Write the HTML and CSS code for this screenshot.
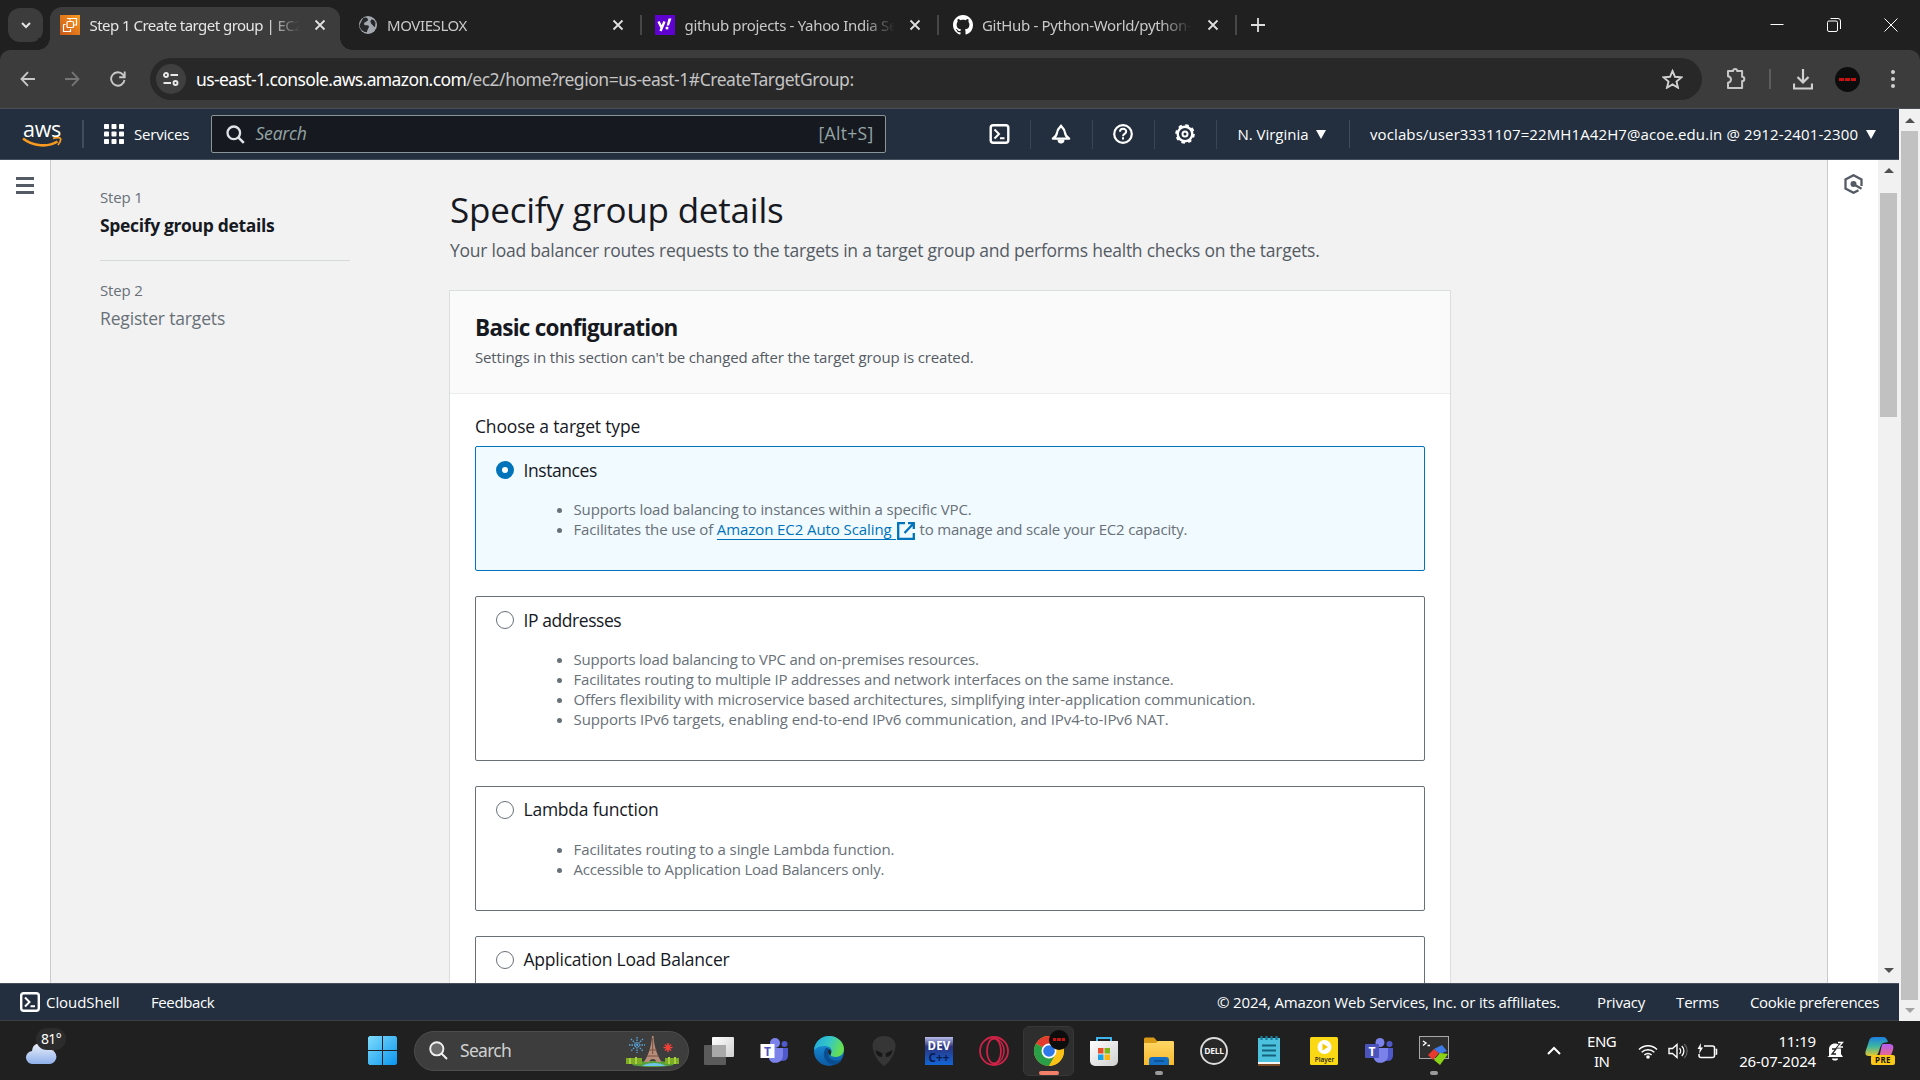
FILE: index.html
```html
<!DOCTYPE html>
<html lang="en">
<head>
<meta charset="utf-8">
<title>Step 1 Create target group | EC2</title>
<link rel="stylesheet" href="styles.css">
</head>
<body>
<svg class="defs" aria-hidden="true">
  <defs>
    <symbol id="x" viewBox="0 0 12 12"><path d="M1.5 1.5l9 9M10.500 1.500l-9 9" fill="none" stroke="currentColor" stroke-width="1.8"/></symbol>
    <symbol id="shell" viewBox="0 0 20 20"><rect x="1.200" y="1.200" width="17.600" height="17.600" rx="2.500" fill="none" stroke="currentColor" stroke-width="2.400"/><path d="M5 5.500l4.500 4.500L5 14.500M10.500 14.300h4.500" fill="none" stroke="currentColor" stroke-width="2"/></symbol>
    <linearGradient id="gOrange" x1="0" y1="1" x2="1" y2="0"><stop offset="0" stop-color="#c9571a"/><stop offset="1" stop-color="#fb9a1c"/></linearGradient>
    <linearGradient id="gWin" x1="0" y1="0" x2="1" y2="1"><stop offset="0" stop-color="#7fdcfb"/><stop offset="1" stop-color="#0a95ef"/></linearGradient>
    <linearGradient id="gCloud" x1="0" y1="0" x2="0" y2="1"><stop offset="0" stop-color="#eef3fc"/><stop offset="1" stop-color="#8fb0ea"/></linearGradient>
    <linearGradient id="gWhite" x1="0" y1="0" x2="1" y2="1"><stop offset="0" stop-color="#fff"/><stop offset="1" stop-color="#cfcfcf"/></linearGradient>
    <linearGradient id="gEdge" x1="0" y1="0" x2="1" y2=".3"><stop offset="0" stop-color="#1fa6dd"/><stop offset=".55" stop-color="#35c7c6"/><stop offset="1" stop-color="#66e052"/></linearGradient>
    <linearGradient id="gEdge2" x1="0" y1="0" x2="0" y2="1"><stop offset="0" stop-color="#1b9de2"/><stop offset="1" stop-color="#0c59a4"/></linearGradient>
    <linearGradient id="gDev" x1="0" y1="0" x2="0" y2="1"><stop offset="0" stop-color="#b9bdea"/><stop offset=".35" stop-color="#2b3480"/><stop offset="1" stop-color="#1266d8"/></linearGradient>
    <linearGradient id="gFold" x1="0" y1="0" x2="0" y2="1"><stop offset="0" stop-color="#ffd766"/><stop offset="1" stop-color="#f7b92c"/></linearGradient>
    <linearGradient id="gCop1" x1="0" y1="0" x2="0" y2="1"><stop offset="0" stop-color="#1a7fe0"/><stop offset=".5" stop-color="#3fb6a0"/><stop offset="1" stop-color="#e6c92e"/></linearGradient>
    <linearGradient id="gCop2" x1="0" y1="0" x2="0" y2="1"><stop offset="0" stop-color="#b45df0"/><stop offset="1" stop-color="#f2697a"/></linearGradient>
  </defs>
</svg>

<header class="tabstrip">
  <button class="tab-search"><svg width="10" height="7" viewBox="0 0 10 7"><path d="M1 1l4 4 4-4" fill="none" stroke="#e3e3e3" stroke-width="2"/></svg></button>
  <div class="tab active">
    <svg class="fav" viewBox="0 0 20 20"><rect width="20" height="20" fill="url(#gOrange)"/><g fill="none" stroke="#fff" stroke-width="1.200"><path d="M7 3.500h9.500v6.500h-2.500M3.500 9.500v7h7v-2.500M3.500 9.500h2M10 3.500v2"/><rect x="7" y="6.500" width="6.500" height="6" rx="1"/></g></svg>
    <span class="tab-title t1">Step 1 Create target group | EC2</span>
    <svg class="tab-x"><use href="#x"/></svg>
  </div>
  <div class="tab sep">
    <svg class="fav" viewBox="0 0 20 20"><circle cx="10" cy="10" r="9" fill="#a3a8ae"/><path d="M5 3.200c3-1.500 5 0 5 2-1 2-4 1-4 4 1 2 4 0 5 2 0 2-2 3-2 6-4 0-7-3-7.500-7C3 7 4 5 5 3.200zM13 5c2-1 3 0 4.500 2.500L17 12c-1 0-2-2-3.500-3-1-1-1.500-3-.5-4z" fill="#26272a"/></svg>
    <span class="tab-title t2">MOVIESLOX</span>
    <svg class="tab-x"><use href="#x"/></svg>
  </div>
  <div class="tab sep">
    <svg class="fav" viewBox="0 0 20 20"><rect width="20" height="20" fill="#5f01d1"/><path d="M3.500 6.500l3 6M9.500 6.500l-4 9.500" stroke="#fff" stroke-width="2.400" fill="none"/><path d="M13.500 3.500h3L14 10.500h-2.300z" fill="#fff"/><circle cx="12" cy="13" r="1.500" fill="#fff"/></svg>
    <span class="tab-title t3">github projects - Yahoo India Se</span>
    <svg class="tab-x"><use href="#x"/></svg>
  </div>
  <div class="tab sep">
    <svg class="fav" viewBox="0 0 16 16"><path fill="#fff" d="M8 0C3.580 0 0 3.580 0 8c0 3.540 2.290 6.530 5.470 7.590.4.070.550-.170.550-.380 0-.190-.010-.820-.010-1.490-2.010.370-2.530-.490-2.690-.940-.090-.230-.480-.940-.820-1.130-.280-.150-.680-.520-.010-.530.630-.010 1.080.580 1.230.820.720 1.210 1.870.870 2.330.660.070-.520.280-.870.510-1.070-1.780-.2-3.640-.890-3.640-3.950 0-.870.310-1.590.820-2.150-.080-.2-.360-1.020.080-2.120 0 0 .670-.210 2.200.820.640-.180 1.320-.270 2-.270s1.360.090 2 .270c1.530-1.040 2.200-.820 2.200-.820.440 1.100.160 1.920.080 2.120.510.560.820 1.270.820 2.150 0 3.070-1.870 3.750-3.650 3.950.290.250.540.730.540 1.480 0 1.070-.010 1.930-.010 2.200 0 .210.150.460.550.380A8 8 0 0 0 16 8c0-4.420-3.580-8-8-8z"/></svg>
    <span class="tab-title t4">GitHub - Python-World/python-</span>
    <svg class="tab-x"><use href="#x"/></svg>
  </div>
  <svg class="new-tab" viewBox="0 0 14 14"><path d="M7 0v14M0 7h14" stroke="#dedede" stroke-width="1.800"/></svg>
  <div class="win-buttons">
    <svg width="14" height="14" viewBox="0 0 14 14"><path d="M.5 6.500h13" stroke="#fff"/></svg>
    <svg width="14" height="14" viewBox="0 0 14 14"><rect x=".5" y="3" width="10" height="10.500" rx="1.500" fill="none" stroke="#fff"/><path d="M3.500 .5h7.500a2.500 2.500 0 0 1 2.500 2.500v8" fill="none" stroke="#fff"/></svg>
    <svg width="14" height="14" viewBox="0 0 14 14"><path d="M.5 .5l13 13M13.500 .5l-13 13" stroke="#fff"/></svg>
  </div>
</header>

<div class="toolbar">
  <svg class="tb-back" width="16" height="16" viewBox="0 0 16 16"><path d="M15 8H2M8 1.200L1.500 8 8 14.800" fill="none" stroke="#c7c7c7" stroke-width="1.900"/></svg>
  <svg class="tb-fwd" width="16" height="16" viewBox="0 0 16 16"><path d="M1 8h13M8 1.200L14.500 8 8 14.800" fill="none" stroke="#757575" stroke-width="1.900"/></svg>
  <svg class="tb-reload" width="16" height="16" viewBox="0 0 16 16"><path d="M14.500 9A6.700 6.700 0 1 1 13 3.700L14.500 5.500M14.700 .5v5.700H9.200" fill="none" stroke="#c7c7c7" stroke-width="1.900"/></svg>
  <div class="omnibox">
    <span class="site-info"><svg width="16" height="14" viewBox="0 0 16 14"><g fill="none" stroke="#e8e8e8" stroke-width="1.900"><circle cx="3" cy="3" r="2"/><path d="M7.500 3H15M.5 11h7.500"/><circle cx="12.500" cy="11" r="2"/></g></svg></span>
    <span class="url"><b>us-east-1.console.aws.amazon.com</b>/ec2/home?region=us-east-1#CreateTargetGroup:</span>
    <svg class="star" width="21" height="20" viewBox="0 0 21 20"><path d="M10.500 2l2.500 5.800 6.300.600-4.800 4.100 1.500 6.200-5.500-3.300L5 18.700l1.500-6.200L1.700 8.400 8 7.800z" fill="none" stroke="#d0d0d0" stroke-width="1.900"/></svg>
  </div>
  <svg class="ext" width="21" height="22" viewBox="0 0 21 22"><path d="M2.500 3h4.600a2 2 0 0 1 4 0h5v5.700a2.200 2.200 0 0 1 0 4.400V20H2v-5.200c4-1 4-5.600 0-6.500V3z" fill="none" stroke="#c7c7c7" stroke-width="2" stroke-linejoin="round"/></svg>
  <i class="tb-sep"></i>
  <svg class="dl" width="20" height="21" viewBox="0 0 20 21"><path d="M10 0v13M4.500 8L10 13.500 15.500 8M1 14.500V19.500h18V14.500" fill="none" stroke="#d0d0d0" stroke-width="2.200"/></svg>
  <span class="avatar"><i></i><i></i><i></i></span>
  <svg class="kebab" width="4" height="20" viewBox="0 0 4 20"><g fill="#d0d0d0"><circle cx="2" cy="3" r="2"/><circle cx="2" cy="10" r="2"/><circle cx="2" cy="17" r="2"/></g></svg>
</div>

<div class="viewport">
  <div class="page">
    <nav class="awsnav">
      <div class="logo"><span>aws</span><svg width="40" height="11" viewBox="0 0 40 11"><path d="M1 1.500C11 9.500 26 10.500 35.500 4.500" fill="none" stroke="#f79a1e" stroke-width="2.600"/><path d="M31 1.500c3-1.200 7-1.200 7.500 0s-.5 4-2.500 6.500" fill="none" stroke="#f79a1e" stroke-width="1.800"/></svg></div>
      <i class="nav-sep big"></i>
      <svg class="grid" width="20" height="20" viewBox="0 0 20 20"><g fill="#fff"><rect width="5" height="5" rx=".8"/><rect x="7.500" width="5" height="5" rx=".8"/><rect x="15" width="5" height="5" rx=".8"/><rect y="7.500" width="5" height="5" rx=".8"/><rect x="7.500" y="7.500" width="5" height="5" rx=".8"/><rect x="15" y="7.500" width="5" height="5" rx=".8"/><rect y="15" width="5" height="5" rx=".8"/><rect x="7.500" y="15" width="5" height="5" rx=".8"/><rect x="15" y="15" width="5" height="5" rx=".8"/></g></svg>
      <span class="services">Services</span>
      <div class="searchbox">
        <svg width="19" height="19" viewBox="0 0 19 19"><circle cx="7.800" cy="7.800" r="6.300" fill="none" stroke="#dfe3e6" stroke-width="2.300"/><path d="M12.300 12.300l5.500 5.500" stroke="#dfe3e6" stroke-width="2.600"/></svg>
        <em>Search</em><span>[Alt+S]</span>
      </div>
      <div class="nav-icons">
        <span><svg width="21" height="20"><use href="#shell"/></svg></span>
        <span><svg width="20" height="20" viewBox="0 0 20 20"><path d="M10 1.500C9.500 4 6.500 4 6.200 8c-.3 3.500-1.500 4.500-4.400 6.700h16.400C15.300 12.500 14.100 11.500 13.800 8 13.500 4 10.500 4 10 1.500z" fill="none" stroke="#fff" stroke-width="2.200" stroke-linejoin="round"/><path d="M6.500 15.500a3.500 4 0 0 0 7 0z" fill="#fff"/></svg></span>
        <span><svg width="20" height="20" viewBox="0 0 20 20"><circle cx="10" cy="10" r="8.800" fill="none" stroke="#fff" stroke-width="2.200"/><path d="M7 7.800C7 3.800 13.200 4 13.200 7.500c0 2.300-3.200 2.500-3.200 4.700M10 13.300v2.200" fill="none" stroke="#fff" stroke-width="2"/></svg></span>
        <span><svg width="20" height="20" viewBox="0 0 20 20"><circle cx="10" cy="10" r="7.300" fill="none" stroke="#fff" stroke-width="2.400"/><circle cx="10" cy="10" r="8.700" fill="none" stroke="#fff" stroke-width="2.200" stroke-dasharray="3.500 3.330"/><circle cx="10" cy="10" r="2.500" fill="none" stroke="#fff" stroke-width="2"/></svg></span>
      </div>
      <span class="region">N. Virginia</span><i class="caret"></i>
      <i class="nav-sep mid"></i>
      <span class="account">voclabs/user3331107=22MH1A42H7@acoe.edu.in @ 2912-2401-2300</span><i class="caret"></i>
    </nav>

    <div class="body">
      <aside class="left-rail"><i></i><i></i><i></i></aside>
      <main>
        <ol class="steps">
          <li><small>Step 1</small><strong>Specify group details</strong></li>
          <li><small>Step 2</small><span>Register targets</span></li>
        </ol>
        <section class="content">
          <h1>Specify group details</h1>
          <p class="lead">Your load balancer routes requests to the targets in a target group and performs health checks on the targets.</p>
          <div class="panel">
            <div class="panel-head">
              <h2>Basic configuration</h2>
              <p>Settings in this section can't be changed after the target group is created.</p>
            </div>
            <div class="panel-body">
              <div class="field-label">Choose a target type</div>
              <div class="options">
                <div class="option selected">
                  <label class="tight"><i class="radio"></i>Instances</label>
                  <ul>
                    <li>Supports load balancing to instances within a specific VPC.</li>
                    <li>Facilitates the use of <a>Amazon EC2 Auto Scaling </a><svg class="extlink" width="18" height="18" viewBox="0 0 18 18"><path d="M8 1.200H1.200v15.600h15.600V11M11 1.200h5.800V7M16.500 1.500l-9 9.500" fill="none" stroke="#0073bb" stroke-width="2.300"/></svg><span class="tail">to manage and scale your EC2 capacity.</span></li>
                  </ul>
                </div>
                <div class="option">
                  <label class="tight"><i class="radio"></i>IP addresses</label>
                  <ul class="four">
                    <li class="narrow">Supports load balancing to VPC and on-premises resources.</li>
                    <li class="narrow">Facilitates routing to multiple IP addresses and network interfaces on the same instance.</li>
                    <li>Offers flexibility with microservice based architectures, simplifying inter-application communication.</li>
                    <li class="wide">Supports IPv6 targets, enabling end-to-end IPv6 communication, and IPv4-to-IPv6 NAT.</li>
                  </ul>
                </div>
                <div class="option">
                  <label><i class="radio"></i>Lambda function</label>
                  <ul>
                    <li class="wide">Facilitates routing to a single Lambda function.</li>
                    <li class="narrow">Accessible to Application Load Balancers only.</li>
                  </ul>
                </div>
                <div class="option last">
                  <label><i class="radio"></i>Application Load Balancer</label>
                </div>
              </div>
            </div>
          </div>
        </section>
      </main>
      <aside class="right-rail"><svg width="19" height="20" viewBox="0 0 19 20"><path d="M17.500 12V5.500L9.500 1.200 1.500 5.500v9l8 4.300 5-2.600" fill="none" stroke="#545b64" stroke-width="2.300"/><circle cx="9.500" cy="10" r="3" fill="#545b64"/><path d="M10 10.500l7.500 4.200" stroke="#545b64" stroke-width="2.300"/></svg></aside>
      <div class="scroll inner"><i class="up"></i><b></b><i class="down"></i></div>
    </div>

    <footer class="awsfoot">
      <svg width="20" height="20"><use href="#shell"/></svg>
      <span class="cs">CloudShell</span><span class="fb">Feedback</span>
      <span class="copy">© 2024, Amazon Web Services, Inc. or its affiliates.</span>
      <span class="pv">Privacy</span><span class="tm">Terms</span><span class="ck">Cookie preferences</span>
    </footer>
  </div>
  <div class="scroll outer"><i class="up"></i><b></b><i class="down"></i></div>
</div>

<div class="taskbar">
  <div class="weather">
    <svg width="32" height="24" viewBox="0 0 32 24"><path d="M20 5l8 0v6z" fill="#e8792b"/><path d="M7 24a6.500 6.500 0 0 1-1-13A8.500 8.500 0 0 1 21.500 6.500 7 7 0 0 1 24 9.500 7.300 7.300 0 0 1 24 24z" fill="url(#gCloud)"/></svg>
    <span>81°</span>
  </div>
  <svg class="start" width="29" height="29" viewBox="0 0 29 29"><path d="M1.500 0H14v14H0V1.500zM15 0h12.500L29 1.500V14H15zM0 15h14v14H1.500L0 27.500zM15 15h14v12.500L27.500 29H15z" fill="url(#gWin)"/></svg>
  <div class="tsearch">
    <svg width="19" height="19" viewBox="0 0 19 19"><circle cx="7.800" cy="7.800" r="6.600" fill="#6b6b6b" stroke="#f0f0f0" stroke-width="1.900"/><path d="M12.500 12.500l5.500 5.500" stroke="#f0f0f0" stroke-width="2"/></svg>
    <span>Search</span>
    <svg width="54" height="32" viewBox="0 0 54 32"><g stroke="#5aa8e0" stroke-width="1.300" stroke-dasharray="1.500 1"><path d="M11 2v16M3 10h16M5 4l12 12M17 4L5 16"/></g><g stroke="#f04038" stroke-width="1.500"><path d="M42 8v9M37.500 12.500h9M39 9.500l6 6M45 9.500l-6 6"/></g><ellipse cx="27" cy="29" rx="21" ry="3" fill="#5aa03a"/><path d="M16 31c6-4 18-4 24 0z" fill="#6cc6e8"/><path d="M0 23h16v6H0zM39 23h14v6H39z" fill="#7cab26"/><path d="M4 23v6M10 22v7M43 22v7M49 22v7" stroke="#a8cf40" stroke-width="2"/><path d="M26 1h1.500c.5 9 2.500 17 8 26h-5c-1-4-6-4-7.500 0h-5c5.500-9 7.500-17 8-26z" fill="#b98d7a"/><path d="M23 15h8M21 21h12M26.700 3v16" stroke="#74503f"/></svg>
  </div>
  <div class="apps">
    <div><svg viewBox="0 0 32 32"><rect x="9" y="2" width="22" height="20" rx="1" fill="url(#gWhite)"/><rect x="1" y="10" width="22" height="20" rx="1" fill="#666" opacity=".85"/><rect x="9" y="10" width="14" height="12" fill="#a9a9a9"/></svg></div>
    <div><svg viewBox="0 0 32 32"><circle cx="17" cy="8" r="5" fill="#7b83eb"/><circle cx="26.500" cy="9" r="3" fill="#5059c9"/><path d="M21 13h9v7c0 6-5 7-8 5z" fill="#5059c9"/><path d="M11 13h14v8a7.500 7.500 0 0 1-14 3z" fill="#7b83eb"/><rect x="2.500" y="9" width="14" height="14" fill="#fff"/><text x="9.500" y="20.500" class="glyph" fill="#4b53bc">T</text></svg></div>
    <div><svg viewBox="0 0 32 32"><circle cx="16" cy="16" r="15" fill="url(#gEdge2)"/><path d="M1 15C2 6 9 1 16 1c9 0 15 6.500 15 13 0 5-4 8-8.500 8-3 0-5.500-1-5-2.500 2.500-3 1-8-4.500-8.500-6-.5-10 2-12 4z" fill="url(#gEdge)"/><path d="M13 13c-5 6-1 16 8 17 4-1 7-3 8-5.500-7 3-14 0-13.500-5.500.200-2 1-4-.500-6z" fill="#0a4e92"/><path d="M16 14c-1.500 2-1 6 3 7.500l3 .500c-2.500 0-5-1-4.500-2.500 1-1.500 1-4-1.500-5.500z" fill="#202020"/></svg></div>
    <div><svg viewBox="0 0 32 32"><path d="M16 1c7 0 11.500 4 11.500 10 0 7-7 18-11.500 20C11.500 29 4.500 18 4.500 11 4.500 5 9 1 16 1z" fill="#363636"/><path d="M7.500 15l7 3.500-.5 3.500c-4 0-6-3-6.500-7zM24.500 15l-7 3.500.5 3.500c4 0 6-3 6.500-7z" fill="#171717"/></svg></div>
    <div><svg viewBox="0 0 32 32"><rect x="2" y="2" width="28" height="28" fill="url(#gDev)"/><text x="16" y="14.500" class="glyph dev" fill="#fff">DEV</text><text x="16" y="27" class="glyph dev" fill="#0a1a50">C++</text></svg></div>
    <div><svg viewBox="0 0 32 32"><circle cx="16" cy="16" r="14" fill="none" stroke="#cc2347" stroke-width="1.800"/><ellipse cx="16" cy="16" rx="7" ry="12.500" fill="none" stroke="#cc2347" stroke-width="1.800"/><path d="M17 3c12 4 12 22 0 26" fill="none" stroke="#cc2347" stroke-width="1.600"/></svg></div>
    <div class="current"><svg viewBox="0 0 32 32"><circle cx="16" cy="16" r="15" fill="#fbc116"/><path d="M16 16L3 8.500A15 15 0 0 1 29 8.500z" fill="#e33b2e"/><path d="M16 16L3 8.500A15 15 0 0 0 16 31L22.500 19.500z" fill="#2b9f48"/><path d="M16 9h13.300A15 15 0 0 1 16 31l6.300-11z" fill="#fbc116"/><circle cx="16" cy="16" r="7.500" fill="#fff"/><circle cx="16" cy="16" r="5.800" fill="#2f78ea"/></svg><span class="avatar mini"><i></i><i></i><i></i></span></div>
    <div><svg viewBox="0 0 32 32"><path d="M9 8V3h14v5" fill="none" stroke="#3cb4ee" stroke-width="2"/><path d="M2 6h28v20a5 5 0 0 1-5 5H7a5 5 0 0 1-5-5z" fill="url(#gWhite)"/><path d="M10 13h5.500v5.500H10z" fill="#e8502a"/><path d="M16.500 13H22v5.500h-5.500z" fill="#7cb519"/><path d="M10 19.500h5.500V25H10z" fill="#19a1e8"/><path d="M16.500 19.500H22V25h-5.500z" fill="#fbb50e"/></svg></div>
    <div class="open"><svg viewBox="0 0 32 32"><path d="M1 4a1.500 1.500 0 0 1 1.500-1.500H11L14 6h15.500A1.500 1.500 0 0 1 31 7.500V12H1z" fill="#d99a16"/><path d="M1 8h12l2-2h14.500A1.500 1.500 0 0 1 31 7.500V30H1z" fill="url(#gFold)"/><path d="M6 30v-5a3 3 0 0 1 3-3h14a3 3 0 0 1 3 3v5z" fill="#146fc4"/><path d="M11 26h10" stroke="#0b4a8a" stroke-width="1.500"/></svg></div>
    <div><svg viewBox="0 0 32 32"><circle cx="16" cy="16" r="13" fill="#282828" stroke="#dcdcdc" stroke-width="1.900"/><text x="16" y="19" class="glyph dell" fill="#f4f4f4">DELL</text></svg></div>
    <div><svg viewBox="0 0 32 32"><rect x="5" y="3" width="22" height="27" fill="#4cc1de"/><path d="M5 27h22v2H5z" fill="#f4f4f4"/><path d="M5 29h22v2H5z" fill="#7a4a22"/><path d="M9 10.500h14M9 15.500h14M9 20.500h14" stroke="#15627c" stroke-width="2"/><path d="M8.500 1v4M13.500 1v4M18.500 1v4M23.500 1v4" stroke="#1a7c9c" stroke-width="2.200"/></svg></div>
    <div><svg viewBox="0 0 32 32"><rect x="2" y="2" width="28" height="28" rx="1.500" fill="#fbd814"/><circle cx="16.500" cy="12" r="7" fill="#fff"/><path d="M14.500 8.500l5.500 3.500-5.500 3.500z" fill="#f3c800"/><text x="16.500" y="26.500" class="glyph player" fill="#222">Player</text></svg></div>
    <div><svg viewBox="0 0 32 32"><circle cx="17" cy="7.500" r="4.500" fill="#7b83eb"/><circle cx="26.500" cy="9" r="3" fill="#5059c9"/><path d="M21 13h9v7c0 6-5 7-8 5z" fill="#5059c9"/><path d="M11 13h14v8a7.500 7.500 0 0 1-14 3z" fill="#7b83eb"/><rect x="2" y="9" width="14" height="14" rx="1" fill="#4b53bc"/><text x="9" y="20.500" class="glyph" fill="#fff">T</text></svg></div>
    <div class="open"><svg viewBox="0 0 32 32"><rect x="1.500" y="1.500" width="29" height="22" fill="#2f2f2f" stroke="#a8a8a8"/><path d="M5 6l3 2-3 2.500M9.500 10.500h2.500" stroke="#fff" fill="none" stroke-width="1.400"/><path d="M10 20l6-6 5 4-6 7z" fill="#e8392e"/><path d="M16 14l8-4 5 6-7 3z" fill="#3c7be8"/><path d="M16 25l6-7 8 1-8 11z" fill="#8bd216"/></svg></div>
  </div>
  <div class="tray">
    <svg class="chev" width="14" height="9" viewBox="0 0 14 9"><path d="M1 8l6-6 6 6" fill="none" stroke="#fff" stroke-width="2"/></svg>
    <span class="lang">ENG<br>IN</span>
    <svg class="wifi" width="20" height="16" viewBox="0 0 20 16"><g fill="none" stroke="#fff" stroke-width="1.500"><path d="M1 6.500a12.700 12.700 0 0 1 18 0M3.700 9.300a8.900 8.900 0 0 1 12.600 0M6.400 12a5.100 5.100 0 0 1 7.200 0"/></g><circle cx="10" cy="14" r="1.800" fill="#fff"/></svg>
    <svg class="vol" width="20" height="16" viewBox="0 0 20 16"><path d="M1 5.500h3.500L9 1.500v13l-4.500-4H1z" fill="none" stroke="#fff" stroke-width="1.400"/><path d="M11.500 5.200c1.500 1.500 1.500 4.100 0 5.600M13.800 3c2.800 2.800 2.800 7.200 0 10" fill="none" stroke="#fff" stroke-width="1.300"/><path d="M16.300 1c3.800 3.900 3.800 10.100 0 14" fill="none" stroke="#666" stroke-width="1.200"/></svg>
    <svg class="bat" width="21" height="16" viewBox="0 0 21 16"><path d="M7 3h8.500a2 2 0 0 1 2 2v7.500a2 2 0 0 1-2 2H4a2 2 0 0 1-2-2V11" fill="none" stroke="#fff" stroke-width="1.500"/><path d="M18.500 6.500h1v4.500h-1" stroke="#fff" stroke-width="1.500" fill="none"/><path d="M4 0L.5 6h2.300L2 11l4-6.500H3.700z" fill="#fff"/></svg>
    <span class="clock">11:19<br>26-07-2024</span>
    <svg class="dnd" width="17" height="20" viewBox="0 0 17 20"><path d="M2 15V8.500C2 5 4.500 2.500 8 2.500s6 2.500 6 6V13l2 3H0z" fill="#fff"/><path d="M5 17.500h6a3 2 0 0 1-6 0z" fill="#fff"/><path d="M5 8h4l-4 5h4" stroke="#202020" stroke-width="1.300" fill="none"/><path d="M11 1.500h4.500L11.500 6H16" stroke="#202020" stroke-width="3" fill="none"/><path d="M11 1.500h4.500L11.500 6H16" stroke="#fff" stroke-width="1.300" fill="none"/></svg>
    <div class="copilot"><svg width="30" height="30" viewBox="0 0 30 30"><path d="M9 1h9c3 0 4 2 5 5l-5 1c-2 1-3 5-4 8s-2 5-5 5H4c-4 0-4-3-3-6L4 5c1-3 2-4 5-4z" fill="url(#gCop1)"/><path d="M18 8h6c4 0 5 2 4 6l-3 8H12c3-1 3-5 4-9 .5-3 1-5 2-5z" fill="url(#gCop2)"/></svg><span>PRE</span></div>
  </div>
</div>
</body>
</html>
```
FILE: styles.css
```css
* { box-sizing: border-box; }
html, body { height: 100%; }
body {
  margin: 0;
  width: 1920px;
  height: 1080px;
  overflow: hidden;
  display: flex;
  flex-direction: column;
  background: #202020;
  font-family: "Open Sans", "Noto Sans", sans-serif;
  font-size: 17.5px;
  line-height: 27.5px;
  color: #16191f;
}
.defs { position: absolute; width: 0; height: 0; }
svg { display: block; flex: none; }
i { font-style: normal; flex: none; }
span { white-space: nowrap; }

/* Browser tab strip */
.tabstrip { height: 50px; flex: none; display: flex; align-items: center; background: #202020; }
.tab-search { width: 35px; height: 34px; margin: 0 7px 0 8px; padding: 0; border: 0; border-radius: 12px; background: #3c3c3c; display: flex; align-items: center; justify-content: center; }
.tab { position: relative; width: 297.5px; height: 50px; display: flex; align-items: center; padding-left: 10px; color: #c9c9c9; font: 15px/20px "Noto Sans", sans-serif; }
.tab.active { color: #e6e6e6; z-index: 1; }
.tab.active::before { content: ""; position: absolute; z-index: -1; left: 0; top: 7px; width: 290px; height: 43px; border-radius: 12px 12px 0 0; background: #3c3c3c; }
.tab.active::after { content: ""; position: absolute; z-index: -1; left: -12px; bottom: 0; width: 314px; height: 12px; background: radial-gradient(circle at 0 0, #202020 11.500px, #3c3c3c 12px) left / 12px 12px no-repeat, radial-gradient(circle at 100% 0, #202020 11.500px, #3c3c3c 12px) right / 12px 12px no-repeat; }
.tab.sep::after { content: ""; position: absolute; right: 3.500px; top: 15px; width: 2px; height: 20px; background: #474747; }
.fav { width: 20px; height: 20px; margin-right: 9.500px; }
.tab-title { width: 213px; overflow: hidden; white-space: nowrap; -webkit-mask-image: linear-gradient(90deg, #000 178px, transparent 210px); mask-image: linear-gradient(90deg, #000 178px, transparent 210px); }
.t1 { letter-spacing: -.53px; }
.t2 { letter-spacing: -.4px; }
.t3, .t4 { letter-spacing: -.33px; }
.tab-x { width: 12px; height: 12px; margin-left: 11.500px; color: #e0e0e0; }
.new-tab { width: 14px; height: 14px; margin-left: 11px; }
.win-buttons { margin-left: auto; margin-right: 22px; display: flex; gap: 43px; }

/* Address bar */
.toolbar { height: 58px; flex: none; display: flex; align-items: center; background: #3c3c3c; border-radius: 10px 10px 0 0; padding-left: 20px; }
.tb-fwd { margin-left: 28px; }
.tb-reload { margin-left: 30px; }
.omnibox { width: 1552px; height: 42px; margin-left: 24px; border-radius: 21px; background: #282828; display: flex; align-items: center; padding-left: 6px; }
.site-info { width: 30px; height: 30px; border-radius: 50%; background: #3f3f3f; display: flex; align-items: center; justify-content: center; }
.url { margin-left: 10px; font: 17.5px/24px "Noto Sans", sans-serif; letter-spacing: -.47px; color: #c4c4c4; }
.url b { font-weight: 400; letter-spacing: -.61px; color: #fff; }
.star { margin-left: auto; margin-right: 19.500px; }
.ext { margin-left: 24px; }
.tb-sep { width: 2px; height: 20px; margin: 0 22px; background: #5c5c5c; }
.avatar { width: 25px; height: 25px; margin-left: 22px; border-radius: 50%; background: #0d0d0d; display: flex; align-items: center; justify-content: center; gap: 1.500px; }
.avatar i { width: 4.500px; height: 3px; background: #c81212; }
.kebab { margin-left: 31px; }

/* Page area with its outer scrollbar */
.viewport { height: 913px; flex: none; display: flex; border-top: 1px solid #4a4f57; }
.page { width: 1899px; display: flex; flex-direction: column; }

.awsnav { height: 51px; flex: none; display: flex; align-items: center; background: #232f3e; color: #fff; font-size: 15px; font-weight: 500; border-bottom: 1px solid #46505d; }
.logo { width: 40px; height: 28px; margin-left: 22px; display: flex; flex-direction: column; align-items: center; }
.logo span { font-size: 21.5px; line-height: 17px; height: 17px; letter-spacing: -.3px; font-weight: 500; }
.nav-sep { width: 1px; height: 28px; background: #414c59; }
.nav-sep.big { width: 2px; margin: 0 20px 0 19.500px; }
.services { width: 67px; margin-left: 10.500px; letter-spacing: -.2px; }
.services, .region, .account { padding-top: 1px; }
.searchbox { width: 675px; height: 38px; margin-left: 9.500px; border: 1px solid #8b9598; border-radius: 2px; background: #16191f; display: flex; align-items: center; padding: 0 11px 0 14px; color: #95a5a6; font-size: 17.5px; font-weight: 400; }
.searchbox em { margin-left: 11px; letter-spacing: -.2px; }
.searchbox span { margin-left: auto; letter-spacing: .32px; }
.nav-icons { display: flex; margin-left: 83px; }
.nav-icons span { width: 62px; height: 29px; display: flex; align-items: center; justify-content: center; border-right: 1px solid #3a4553; }
.region { margin-left: 21px; width: 71.500px; letter-spacing: -.02px; }
.caret { width: 0; height: 0; margin-left: 7px; border: 5px solid transparent; border-top: 9px solid #fff; border-bottom: 0; }
.nav-sep.mid { margin: 0 20px 0 23px; }
.account { width: 488px; letter-spacing: .11px; }
.account + .caret { margin-left: 8px; }

.body { flex: 1; min-height: 0; display: flex; }
.left-rail { width: 51px; background: #fff; border-right: 1px solid #c5cccc; display: flex; flex-direction: column; gap: 4.500px; padding: 17px 0 0 16px; }
.left-rail i { width: 18px; height: 2.500px; background: #545b64; }
main { width: 1776px; display: flex; padding-left: 49px; background: #f2f2f2; overflow: hidden; }

.steps { width: 250px; margin: 27px 100px 0 0; padding: 0; list-style: none; letter-spacing: -.16px; color: #687078; }
.steps li { display: flex; flex-direction: column; gap: 5px; }
.steps li + li { margin-top: 20px; padding-top: 19px; border-top: 1px solid #d5dbdb; }
.steps small { font-size: 15px; line-height: 20px; }
.steps strong { font-weight: 700; letter-spacing: -.34px; color: #16191f; }

.content { width: 1000px; }
h1 { margin: 26.500px 0 5.500px; font-size: 35px; line-height: 45px; font-weight: 400; letter-spacing: -.21px; }
.lead { margin: 0 0 26px; color: #545b64; letter-spacing: -.24px; white-space: nowrap; }
.panel { background: #fff; box-shadow: 0 0 0 1px #d9dede; height: 1200px; }
.panel-head { height: 103px; padding: 23.500px 25px 0; background: #fafafa; border-bottom: 1px solid #eaeded; }
h2 { margin: 0 0 5px; font-size: 22.5px; line-height: 27.5px; font-weight: 700; letter-spacing: -.74px; }
.panel-head p { margin: 0; font-size: 15px; line-height: 20px; letter-spacing: -.14px; color: #545b64; }
.panel-body { padding: 19px 25px; }
.field-label { letter-spacing: -.17px; }
.options { margin-top: 6px; display: flex; flex-direction: column; gap: 25px; }
.option { border: 1px solid #687078; border-radius: 2px; padding: 9.500px 20px 31px; }
.option.selected { border-color: #0073bb; background: #f1faff; }
.option label { display: flex; align-items: center; letter-spacing: -.23px; }
.option label.tight { letter-spacing: -.43px; }
.option.last { height: 126px; }
.radio { width: 18px; height: 18px; margin-right: 9.500px; border: 1px solid #687078; border-radius: 50%; background: #fff; }
.selected .radio { border: 6px solid #0073bb; }
.option ul { margin: 15px 0 0; padding: 0 0 0 77.500px; font-size: 15px; line-height: 20px; letter-spacing: -.145px; color: #687078; }
.option ul.four { margin-top: 14.500px; }
.option li { white-space: nowrap; height: 20px; }
.option li.narrow { letter-spacing: -.2px; }
.option li.wide { letter-spacing: -.09px; }
.option a { color: #0073bb; border-bottom: 1px solid #0073bb; white-space: pre; letter-spacing: -.08px; }
.extlink { display: inline-block; vertical-align: -2px; margin: -5px 5px -3px 1px; }
.tail { letter-spacing: -.18px; }

.right-rail { width: 51px; background: #fff; border-left: 1px solid #c5cccc; padding: 14px 0 0 15.500px; }
.scroll { display: flex; flex-direction: column; align-items: center; background: #f1f1f1; }
.scroll .up, .scroll .down { width: 0; height: 0; border: 5px solid transparent; }
.scroll .up { border-top: 0; border-bottom-color: #505050; }
.scroll .down { border-bottom: 0; border-top-color: #505050; margin-top: auto; }
.scroll b { background: #c1c1c1; }
.inner { width: 21px; padding: 8px 0 10px; }
.inner b { width: 17px; height: 224px; margin-top: 20px; }
.outer { width: 21px; padding: 9px 0 8px; }
.outer b { width: 17px; height: 869px; margin-top: 8px; }
.outer .down { border-top-color: #a3a3a3; }

.awsfoot { height: 38px; flex: none; display: flex; align-items: center; background: #232f3e; border-top: 1px solid #46505d; border-bottom: 1px solid #3b3f45; color: #fff; font-size: 15px; font-weight: 500; padding: 0 20px; }
.awsfoot span { padding-top: 1px; }
.cs { margin-left: 6px; width: 105px; letter-spacing: -.06px; }
.fb { letter-spacing: -.4px; }
.copy { margin-left: auto; letter-spacing: -.13px; }
.pv { margin-left: 37px; letter-spacing: -.21px; }
.tm { margin-left: 31px; letter-spacing: -.21px; }
.ck { margin-left: 31px; letter-spacing: -.34px; }

/* Windows taskbar */
.taskbar { height: 59px; flex: none; display: flex; align-items: center; background: #202020; color: #fff; font-family: "Noto Sans", sans-serif; }
.weather { position: relative; width: 60px; height: 59px; margin-left: 26px; padding-top: 19px; }
.weather span { position: absolute; left: 10px; top: 7px; width: 30px; height: 22px; border-radius: 11px; background: #2c2c2c; font-size: 14px; line-height: 21px; text-align: center; letter-spacing: -.6px; }
.start { margin: 0 17px 0 282px; }
.tsearch { width: 275px; height: 40px; border-radius: 20px; background: #3d3d3d; border: 1px solid #4d4d4d; display: flex; align-items: center; padding: 0 8px 0 14px; color: #d0d0d0; letter-spacing: -.7px; }
.tsearch span { margin-left: 12px; margin-right: auto; }
.apps { display: flex; margin-left: 2px; }
.apps > div { position: relative; width: 55px; height: 50px; display: flex; align-items: center; justify-content: center; }
.apps > div > svg { width: 32px; height: 32px; }
.apps > .current::before { content: ""; position: absolute; z-index: -1; inset: 0 2px; border-radius: 6px; background: #2e2e2e; border: 1px solid #383838; }
.apps > .current, .taskbar { z-index: 0; }
.apps > .current::after, .apps > .open::after { content: ""; position: absolute; bottom: 1px; width: 20px; height: 4px; border-radius: 2px; background: #f28068; }
.apps > .open::after { width: 8px; background: #9a9a9a; }
.mini { position: absolute; left: 28px; top: 4px; width: 20px; height: 20px; margin: 0; gap: 1px; }
.mini i { width: 3.500px; height: 3px; }
.glyph { font: 700 12px "Open Sans", sans-serif; text-anchor: middle; }
.dev { font-size: 11.5px; letter-spacing: .2px; }
.dell { font-size: 8.5px; letter-spacing: -.3px; }
.player { font-size: 6.500px; font-weight: 600; }
.tray { margin-left: auto; display: flex; align-items: center; height: 59px; font-size: 15px; line-height: 20px; padding-right: 25px; }
.lang { width: 40px; margin-left: 21px; text-align: center; letter-spacing: -.5px; }
.wifi { margin-left: 16.500px; }
.vol { margin-left: 9.500px; }
.bat { margin-left: 9.500px; }
.clock { margin-left: 21px; text-align: right; letter-spacing: -.15px; }
.dnd { margin-left: 10.500px; }
.copilot { position: relative; width: 30px; height: 30px; margin-left: 21.500px; }
.copilot span { position: absolute; left: 6px; top: 19px; width: 24px; height: 10px; border-radius: 2px; background: #fbc81a; color: #111; font-size: 8px; line-height: 10px; font-weight: 700; text-align: center; letter-spacing: .4px; }
```
